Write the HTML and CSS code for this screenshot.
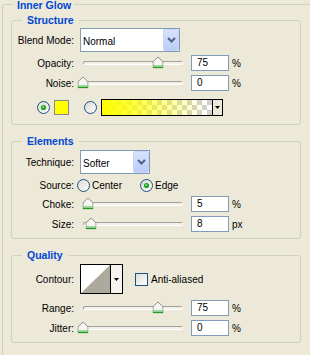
FILE: index.html
```html
<!DOCTYPE html>
<html>
<head>
<meta charset="utf-8">
<link rel="stylesheet" href="styles.css">
</head>
<body>
<div class="panel">
  <div class="title outer-title">Inner Glow</div>

  <section class="group g-structure">
    <div class="title">Structure</div>
    <div class="row row-select">
      <span class="label">Blend Mode:</span>
      <div class="select select-blend">
        <span class="select-text">Normal</span>
        <span class="select-btn"><svg width="9" height="6" viewBox="0 0 9 6"><polyline points="1,1 4.5,4.5 8,1" fill="none" stroke="#4D6185" stroke-width="2"/></svg></span>
      </div>
    </div>
    <div class="row row-slider">
      <span class="label">Opacity:</span>
      <div class="slider"><div class="track-wrap"><div class="track"></div><span class="thumb" style="left:75%"><svg width="11" height="12" viewBox="0 0 11 12"><path d="M0.5 5.5 L5.5 0.5 L10.5 5.5 V11.5 H0.5 Z" fill="#F6F6F2" stroke="#8F8F8A"/><path d="M1 9.5 H10" stroke="#5ACB5A"/><path d="M0.5 11 H10.5" stroke="#1E9A1E" stroke-width="1.2"/></svg></span></div></div>
      <span class="input">75</span><span class="unit">%</span>
    </div>
    <div class="row row-slider">
      <span class="label">Noise:</span>
      <div class="slider"><div class="track-wrap"><div class="track"></div><span class="thumb" style="left:0%"><svg width="11" height="12" viewBox="0 0 11 12"><path d="M0.5 5.5 L5.5 0.5 L10.5 5.5 V11.5 H0.5 Z" fill="#F6F6F2" stroke="#8F8F8A"/><path d="M1 9.5 H10" stroke="#5ACB5A"/><path d="M0.5 11 H10.5" stroke="#1E9A1E" stroke-width="1.2"/></svg></span></div></div>
      <span class="input">0</span><span class="unit">%</span>
    </div>
    <div class="row row-color">
      <span class="radio"><svg width="13" height="13" viewBox="0 0 13 13"><defs><linearGradient id="rg1" x1="0" y1="0" x2="1" y2="1"><stop offset="0" stop-color="#D8D8D2"/><stop offset="1" stop-color="#FFFFFF"/></linearGradient></defs><circle cx="6.5" cy="6.5" r="6" fill="url(#rg1)" stroke="#1C5180"/><circle cx="6.5" cy="6.5" r="2.6" fill="#21A121"/><circle cx="6.2" cy="6.2" r="1.1" fill="#7EDC7E"/></svg></span>
      <span class="swatch"></span>
      <span class="radio radio-2"><svg width="13" height="13" viewBox="0 0 13 13"><defs><linearGradient id="rg2" x1="0" y1="0" x2="1" y2="1"><stop offset="0" stop-color="#D8D8D2"/><stop offset="1" stop-color="#FFFFFF"/></linearGradient></defs><circle cx="6.5" cy="6.5" r="6" fill="url(#rg2)" stroke="#1C5180"/></svg></span>
      <div class="gradient">
        <span class="grad-fill"></span>
        <span class="drop-arrow"><svg width="5" height="3" viewBox="0 0 5 3"><polygon points="0,0 5,0 2.5,3" fill="#000"/></svg></span>
      </div>
    </div>
  </section>

  <section class="group g-elements">
    <div class="title">Elements</div>
    <div class="row row-select">
      <span class="label">Technique:</span>
      <div class="select select-tech">
        <span class="select-text">Softer</span>
        <span class="select-btn"><svg width="9" height="6" viewBox="0 0 9 6"><polyline points="1,1 4.5,4.5 8,1" fill="none" stroke="#4D6185" stroke-width="2"/></svg></span>
      </div>
    </div>
    <div class="row row-source">
      <span class="label label-source">Source:</span>
      <span class="radio"><svg width="13" height="13" viewBox="0 0 13 13"><defs><linearGradient id="rg3" x1="0" y1="0" x2="1" y2="1"><stop offset="0" stop-color="#D8D8D2"/><stop offset="1" stop-color="#FFFFFF"/></linearGradient></defs><circle cx="6.5" cy="6.5" r="6" fill="url(#rg3)" stroke="#1C5180"/></svg></span>
      <span class="opt-text">Center</span>
      <span class="radio radio-edge"><svg width="13" height="13" viewBox="0 0 13 13"><defs><linearGradient id="rg4" x1="0" y1="0" x2="1" y2="1"><stop offset="0" stop-color="#D8D8D2"/><stop offset="1" stop-color="#FFFFFF"/></linearGradient></defs><circle cx="6.5" cy="6.5" r="6" fill="url(#rg4)" stroke="#1C5180"/><circle cx="6.5" cy="6.5" r="2.6" fill="#21A121"/><circle cx="6.2" cy="6.2" r="1.1" fill="#7EDC7E"/></svg></span>
      <span class="opt-text">Edge</span>
    </div>
    <div class="row row-slider">
      <span class="label">Choke:</span>
      <div class="slider"><div class="track-wrap"><div class="track"></div><span class="thumb" style="left:5%"><svg width="11" height="12" viewBox="0 0 11 12"><path d="M0.5 5.5 L5.5 0.5 L10.5 5.5 V11.5 H0.5 Z" fill="#F6F6F2" stroke="#8F8F8A"/><path d="M1 9.5 H10" stroke="#5ACB5A"/><path d="M0.5 11 H10.5" stroke="#1E9A1E" stroke-width="1.2"/></svg></span></div></div>
      <span class="input">5</span><span class="unit">%</span>
    </div>
    <div class="row row-slider">
      <span class="label">Size:</span>
      <div class="slider"><div class="track-wrap"><div class="track"></div><span class="thumb" style="left:8%"><svg width="11" height="12" viewBox="0 0 11 12"><path d="M0.5 5.5 L5.5 0.5 L10.5 5.5 V11.5 H0.5 Z" fill="#F6F6F2" stroke="#8F8F8A"/><path d="M1 9.5 H10" stroke="#5ACB5A"/><path d="M0.5 11 H10.5" stroke="#1E9A1E" stroke-width="1.2"/></svg></span></div></div>
      <span class="input">8</span><span class="unit">px</span>
    </div>
  </section>

  <section class="group g-quality">
    <div class="title">Quality</div>
    <div class="row row-contour">
      <span class="label">Contour:</span>
      <div class="contour">
        <span class="contour-preview"><svg width="29" height="28" viewBox="0 0 29 28"><rect width="29" height="28" fill="#FFFFFF"/><polygon points="0,28 29,0 29,28" fill="#ADA99D"/></svg></span>
        <span class="drop-arrow contour-arrow"><svg width="5" height="3" viewBox="0 0 5 3"><polygon points="0,0 5,0 2.5,3" fill="#000"/></svg></span>
      </div>
      <span class="checkbox"></span>
      <span class="check-text">Anti-aliased</span>
    </div>
    <div class="row row-slider row-range">
      <span class="label">Range:</span>
      <div class="slider"><div class="track-wrap"><div class="track"></div><span class="thumb" style="left:75%"><svg width="11" height="12" viewBox="0 0 11 12"><path d="M0.5 5.5 L5.5 0.5 L10.5 5.5 V11.5 H0.5 Z" fill="#F6F6F2" stroke="#8F8F8A"/><path d="M1 9.5 H10" stroke="#5ACB5A"/><path d="M0.5 11 H10.5" stroke="#1E9A1E" stroke-width="1.2"/></svg></span></div></div>
      <span class="input">75</span><span class="unit">%</span>
    </div>
    <div class="row row-slider">
      <span class="label">Jitter:</span>
      <div class="slider"><div class="track-wrap"><div class="track"></div><span class="thumb" style="left:0%"><svg width="11" height="12" viewBox="0 0 11 12"><path d="M0.5 5.5 L5.5 0.5 L10.5 5.5 V11.5 H0.5 Z" fill="#F6F6F2" stroke="#8F8F8A"/><path d="M1 9.5 H10" stroke="#5ACB5A"/><path d="M0.5 11 H10.5" stroke="#1E9A1E" stroke-width="1.2"/></svg></span></div></div>
      <span class="input">0</span><span class="unit">%</span>
    </div>
  </section>
</div>
</body>
</html>
```

FILE: styles.css
```css
* { box-sizing: border-box; }
html, body { margin: 0; padding: 0; }
body {
  width: 310px;
  height: 355px;
  overflow: hidden;
  background: #ECE9D8;
  font-family: "Liberation Sans", Arial, sans-serif;
  font-size: 10px;
  color: #000;
}
svg { display: block; }

/* outer group box continues past the right and bottom edges of the frame */
.panel {
  margin: 4px 0 0 2px;
  width: 308px;
  height: 351px;
  border: 1px solid #D0D0BF;
  border-right: none;
  border-bottom: none;
  border-top-left-radius: 3px;
}
.title {
  width: fit-content;
  background: #ECE9D8;
  color: #0046D5;
  font-weight: bold;
  font-size: 10.5px;
  line-height: 13px;
  margin-top: -7px;
  margin-left: 10px;
  padding: 0 5px;
}
.outer-title {
  margin-top: -6px;
  padding: 0 3px 0 4px;
}

.group {
  margin-left: 8px;
  width: 290px;
  border: 1px solid #D0D0BF;
  border-radius: 3px;
}
.g-structure { margin-top: 8px; padding-bottom: 7px; }
.g-elements { margin-top: 16px; padding-bottom: 4px; }
.g-quality { margin-top: 16px; padding-bottom: 4px; }

.row { display: flex; align-items: center; height: 20px; }
.label {
  width: 62px;
  flex-shrink: 0;
  text-align: right;
  margin-right: 6px;
  white-space: nowrap;
}

/* select */
.row-select { height: 24px; margin-top: 1px; }
.g-elements .row-select { margin-top: 2px; }
.select {
  display: flex;
  height: 24px;
  border: 1px solid #7F9DB9;
  background: #FFFFFF;
}
.select-blend { width: 100px; }
.select-tech { width: 70px; }
.select-text {
  flex: 1;
  padding-left: 2px;
  padding-top: 2px;
  align-self: center;
}
.select-btn {
  width: 16px;
  display: flex;
  align-items: center;
  justify-content: center;
  background: linear-gradient(#D7E2FC, #BACDF8);
  border: 1px solid #C6D5F6;
  border-radius: 2px;
}

/* slider */
.row-slider { margin-top: 0; }
.g-structure .row-select + .row-slider { margin-top: 1px; }
.slider {
  width: 106px;
  padding: 0 3px;
  display: flex;
  align-items: center;
  height: 20px;
}
.track-wrap {
  position: relative;
  width: 100px;
  height: 4px;
}
.track {
  height: 4px;
  border: 1px solid;
  border-color: #A2A19A #FFFFFF #FFFFFF #A2A19A;
  background: #F1F0EA;
  border-radius: 2px;
}
.thumb {
  position: absolute;
  top: 50%;
  transform: translate(-50%, -55%);
}
.input {
  margin-left: 5px;
  width: 38px;
  height: 16px;
  border: 1px solid #7F9DB9;
  background: #FFFFFF;
  padding-left: 5px;
  line-height: 14px;
}
.unit { margin-left: 3px; }

/* color row */
.row-color { margin-top: 4px; padding-left: 25px; }
.radio { width: 13px; height: 13px; }
.swatch {
  margin-left: 4px;
  width: 15px;
  height: 15px;
  background: #FFFF00;
  border: 1px solid #8A8A88;
}
.radio-2 { margin-left: 15px; }
.gradient {
  margin-left: 4px;
  width: 122px;
  height: 17px;
  display: flex;
  border: 1px solid #000;
}
.grad-fill {
  flex: 1;
  background:
    linear-gradient(to right, #FFFF00 0%, rgba(255,255,0,0.8) 25%, rgba(255,255,0,0) 95%),
    conic-gradient(#CFCFCF 25%, #FFFFFF 0 50%, #CFCFCF 0 75%, #FFFFFF 0) 0 0 / 10px 10px;
}
.drop-arrow {
  width: 10px;
  border-left: 1px solid #000;
  display: flex;
  align-items: center;
  justify-content: center;
  background: #ECE9D8;
}

/* source row */
.row-source { height: 18px; margin-top: 2px; }
.label-source { margin-right: 3px; }
.opt-text { margin-left: 2px; }
.radio-edge { margin-left: 18px; }

/* contour row */
.row-contour { height: 30px; margin-top: 2px; }
.contour {
  display: flex;
  width: 43px;
  height: 30px;
  border: 1px solid #000;
}
.contour-preview { width: 29px; }
.contour-arrow { width: 12px; background: #F4F3EE; }
.checkbox {
  margin-left: 12px;
  width: 13px;
  height: 13px;
  border: 1px solid #1C5180;
  background: linear-gradient(135deg, #DCDCD7, #FFFFFF);
}
.check-text { margin-left: 3px; }
.row-range { margin-top: 4px; }
```
